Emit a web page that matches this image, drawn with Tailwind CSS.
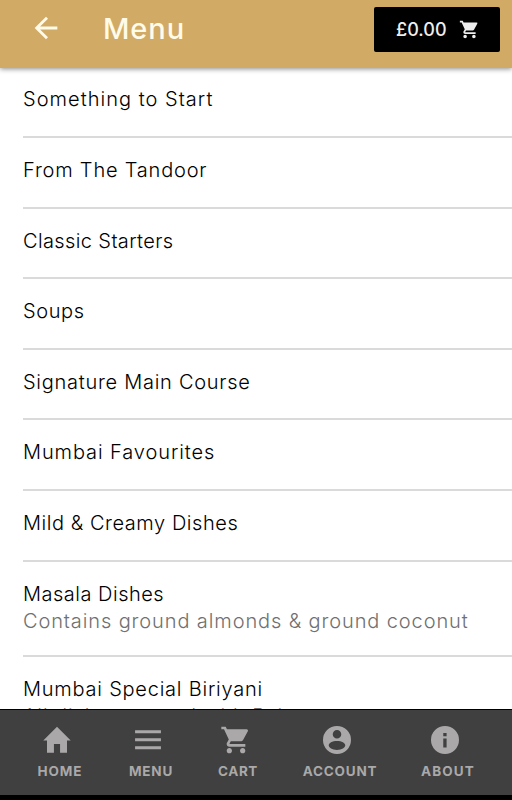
<!DOCTYPE html>
<html lang="en">
<head>
  <meta charset="UTF-8" />
  <meta name="viewport" content="width=device-width, initial-scale=1" />
  <title>Menu</title>
  <script src="https://cdn.jsdelivr.net/npm/@tailwindcss/browser@4"></script>
</head>
<body class="bg-black font-['Inter',sans-serif]">

  <div class="h-[800px] w-[512px] flex flex-col overflow-hidden bg-white">

    <!-- Header -->
    <header class="relative z-10 h-[68px] shrink-0 flex items-start bg-[#d1aa66] shadow-[0_1px_5px_rgba(0,0,0,0.45)]">
      <svg class="ml-[29px] mt-[11px] size-[34px] fill-[#fffbe9]" viewBox="0 0 24 24"><path d="M20 11H7.83l5.59-5.59L12 4l-8 8 8 8 1.41-1.41L7.83 13H20v-2z"/></svg>
      <h1 class="ml-10 mt-[11px] text-[29px] leading-9 font-medium tracking-[0.9px] text-[#fffbe9]">Menu</h1>
      <button class="ml-auto mr-3 mt-[7px] h-[45px] w-[126px] flex items-center rounded-[2px] bg-black pl-[22px] text-[#eee]">
        <span class="w-[63px] text-left text-[18px] font-medium">£0.00</span>
        <svg class="size-[21px] fill-current" viewBox="0 0 24 24"><path d="M7 18c-1.1 0-1.99.9-1.99 2S5.9 22 7 22s2-.9 2-2-.9-2-2-2zM1 2v2h2l3.6 7.59-1.35 2.45c-.16.28-.25.61-.25.96 0 1.1.9 2 2 2h12v-2H7.42c-.14 0-.25-.11-.25-.25l.03-.12.9-1.63h7.45c.75 0 1.41-.41 1.75-1.03l3.58-6.49A1 1 0 0 0 20 4H5.21l-.94-2H1zm16 16c-1.1 0-1.99.9-1.99 2s.89 2 1.99 2 2-.9 2-2-.9-2-2-2z"/></svg>
      </button>
    </header>

    <!-- Category list -->
    <ul class="flex-1 min-h-0 overflow-hidden pl-[23px] text-[20px] leading-[27px] font-light text-black">
      <li class="h-[70px] border-b-2 border-[#dadada] pt-[18px]"><span class="tracking-[1.03px]">Something to Start</span></li>
      <li class="h-[70.6px] border-b-2 border-[#dadada] pt-[19px]"><span class="tracking-[0.8px]">From The Tandoor</span></li>
      <li class="h-[70.6px] border-b-2 border-[#dadada] pt-[19px]"><span class="tracking-[0.38px]">Classic Starters</span></li>
      <li class="h-[70.6px] border-b-2 border-[#dadada] pt-[19px]"><span class="tracking-[0.6px]">Soups</span></li>
      <li class="h-[70.6px] border-b-2 border-[#dadada] pt-[19px]"><span class="tracking-[0.73px]">Signature Main Course</span></li>
      <li class="h-[70.6px] border-b-2 border-[#dadada] pt-[19px]"><span class="tracking-[0.9px]">Mumbai Favourites</span></li>
      <li class="h-[70.6px] border-b-2 border-[#dadada] pt-[19px]"><span class="tracking-[0.55px]">Mild &amp; Creamy Dishes</span></li>
      <li class="h-[95px] border-b-2 border-[#dadada] pt-[19px]">
        <p class="tracking-[0.5px]">Masala Dishes</p>
        <p class="tracking-[0.89px] text-[#707070]">Contains ground almonds &amp; ground coconut</p>
      </li>
      <li class="pt-[19px]">
        <p class="tracking-[0.77px]">Mumbai Special Biriyani</p>
        <p class="tracking-[0.9px] text-[#707070]">All dishes served with Raita</p>
      </li>
    </ul>

    <!-- Bottom tabs -->
    <nav class="h-[86px] shrink-0 flex border-t border-black bg-[#404040] pl-[25px] text-[13.5px] leading-4 font-bold text-[#aaa8a8]">
      <a class="w-[70px] flex flex-col items-center pt-[14px]">
        <svg class="size-8 -ml-1.5 fill-current" viewBox="0 0 24 24"><path d="M9.700 21.500v-6.500h4.600v6.500h5.200v-9.200h2.800L12 2 1.700 12.300h2.800v9.200z"/></svg>
        <span class="mt-[7px] tracking-[0.9px]">HOME</span>
      </a>
      <a class="ml-[21px] w-[70px] flex flex-col items-center pt-[14px]">
        <svg class="size-8 -ml-1.5 fill-current" viewBox="0 0 24 24"><path d="M2.300 4.600h19.400v2.300H2.300zM2.300 10.600h19.400v2.300H2.300zM2.300 16.600h19.400v2.300H2.300z"/></svg>
        <span class="mt-[7px] tracking-[0.8px]">MENU</span>
      </a>
      <a class="ml-[17px] w-[70px] flex flex-col items-center pt-[14px]">
        <svg class="size-8 -ml-1 fill-current" viewBox="0 0 24 24"><path d="M7 18c-1.1 0-1.99.9-1.99 2S5.9 22 7 22s2-.9 2-2-.9-2-2-2zM1 2v2h2l3.6 7.59-1.35 2.45c-.16.28-.25.61-.25.96 0 1.1.9 2 2 2h12v-2H7.42c-.14 0-.25-.11-.25-.25l.03-.12.9-1.63h7.45c.75 0 1.41-.41 1.75-1.03l3.58-6.49A1 1 0 0 0 20 4H5.21l-.94-2H1zm16 16c-1.1 0-1.99.9-1.99 2s.89 2 1.99 2 2-.9 2-2-.9-2-2-2z"/></svg>
        <span class="mt-[7px] tracking-[0.6px]">CART</span>
      </a>
      <a class="ml-[22px] w-[90px] flex flex-col items-center pt-[14px]">
        <svg class="size-8 -ml-1.5 fill-current" viewBox="0 0 24 24"><path fill-rule="evenodd" d="M12 1.5a10.5 10.5 0 1 0 0 21 10.5 10.5 0 0 0 0-21zm0 3a3.200 3.200 0 1 1 0 6.400 3.200 3.200 0 0 1 0-6.400zM12 12.800c3.600 0 6.200 1.500 6.200 3.200s-2.600 3.500-6.200 3.500S5.800 17.700 5.800 16s2.600-3.200 6.200-3.200z"/></svg>
        <span class="mt-[7px] tracking-[0.8px]">ACCOUNT</span>
      </a>
      <a class="ml-[28px] w-[70px] flex flex-col items-center pt-[14px]">
        <svg class="size-8 -ml-1.5 fill-current" viewBox="0 0 24 24"><path fill-rule="evenodd" d="M12 1.500a10.500 10.500 0 1 0 0 21 10.500 10.500 0 0 0 0-21zM10.700 6.800h2.500v2.400h-2.500zM10.700 10.800h2.500v6.800h-2.500z"/></svg>
        <span class="mt-[7px] tracking-[1.1px]">ABOUT</span>
      </a>
    </nav>
    <div class="h-[5px] shrink-0 bg-black"></div>
  </div>

</body>
</html>
